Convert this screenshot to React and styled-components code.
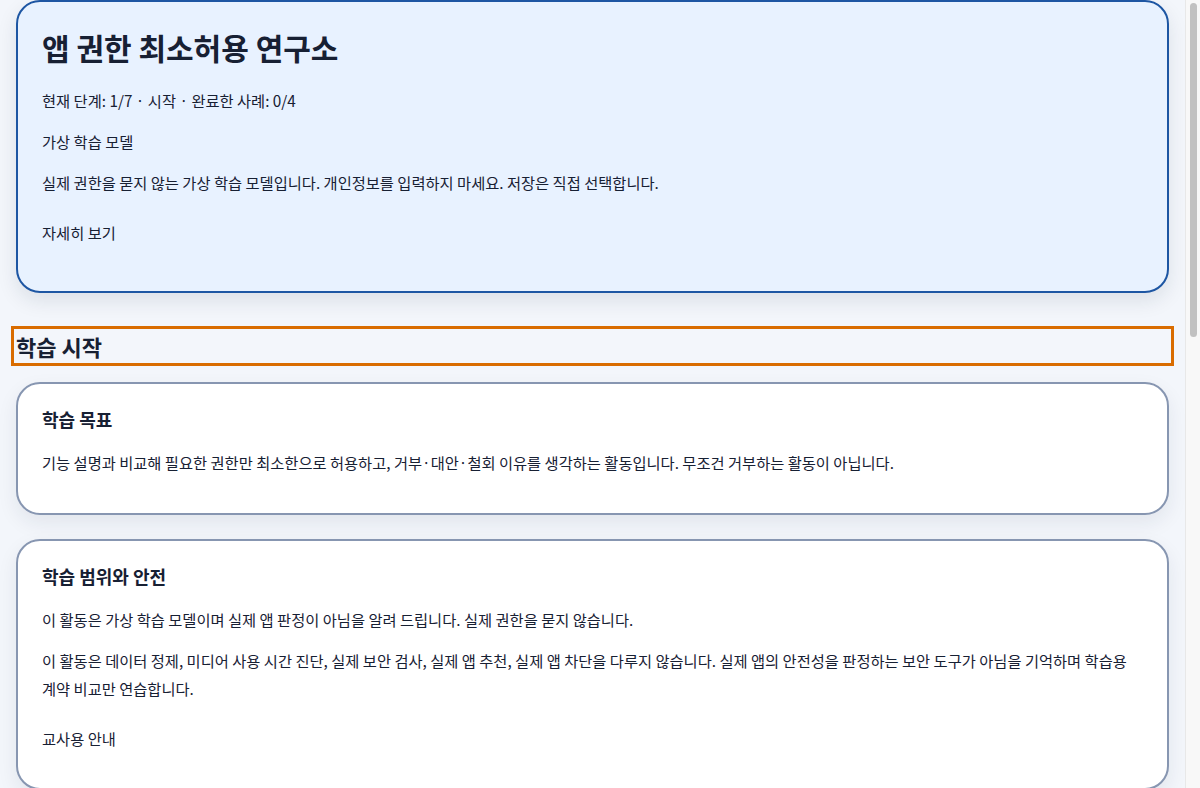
import React from 'react'
import styled, { createGlobalStyle } from 'styled-components'

const GlobalStyle = createGlobalStyle`
  html, body {
    margin: 0;
    padding: 0;
    height: 100%;
    overflow: hidden;
  }
  body {
    background: #f3f6fb;
    color: #172033;
    font-family: "Noto Sans CJK KR", "Noto Sans", sans-serif;
    word-break: keep-all;
  }
  * {
    box-sizing: border-box;
  }
`

const Shell = styled.div`
  display: flex;
  height: 100vh;
`

const Viewport = styled.div`
  flex: 1;
  min-width: 0;
  overflow-y: auto;
  scrollbar-width: none;
  &::-webkit-scrollbar {
    display: none;
  }
`

const ScrollRail = styled.div`
  flex: 0 0 15px;
  display: flex;
  flex-direction: column;
  padding: 3px 3px 0 4px;
  background: #f8f8f8;
  border-left: 1px solid #e8e8e8;
`

const ScrollThumb = styled.div`
  height: ${props => props.size}px;
  border-radius: 4px;
  background: #c1c1c1;
`

const Page = styled.main`
  display: flex;
  flex-direction: column;
  padding: 0 16px 48px;
`

const Hero = styled.header`
  background: #e8f2ff;
  border: 2px solid #1d56a3;
  border-radius: 24px;
  padding: 24px;
  box-shadow: 0 8px 20px rgba(20, 35, 60, 0.1);
`

const Title = styled.h1`
  margin: 0 0 18px;
  font-size: 30px;
  line-height: 42px;
  font-weight: 700;
`

const Text = styled.p`
  margin: 13px 0;
  font-size: 15.3px;
  line-height: 28px;
  &:first-of-type {
    margin-top: 0;
  }
`

const Details = styled.details`
  margin: 22px 0 ${props => props.after || 0}px;
`

const Summary = styled.summary`
  list-style: none;
  cursor: pointer;
  font-size: 15.3px;
  line-height: 28px;
  &::-webkit-details-marker {
    display: none;
  }
`

const SectionTitle = styled.h2`
  margin: 38px 0 21px;
  font-size: 22px;
  line-height: 30px;
  font-weight: 700;
  outline: ${props => props.focused ? '3px solid #d96c00' : 'none'};
  outline-offset: 2px;
`

const Card = styled.section`
  background: #ffffff;
  border: 2px solid #8796b1;
  border-radius: 24px;
  padding: 24px;
  margin-bottom: 24px;
  box-shadow: 0 8px 20px rgba(20, 35, 60, 0.08);
  & > p:last-child {
    margin-bottom: 13px;
  }
`

const CardTitle = styled.h3`
  margin: 0 0 18px;
  font-size: 18px;
  line-height: 22px;
  font-weight: 700;
`

const ButtonRow = styled.div`
  display: flex;
  gap: 12px;
  margin: 8px 0 12px;
`

const Button = styled.button`
  font: inherit;
  font-size: 15px;
  padding: 10px 20px;
  border-radius: 12px;
  border: 2px solid ${props => props.primary ? '#1d56a3' : '#8796b1'};
  background: ${props => props.primary ? '#1d56a3' : '#ffffff'};
  color: ${props => props.primary ? '#ffffff' : '#172033'};
`

export default function App() {
  return (
    <>
      <GlobalStyle />
      <Shell>
        <Viewport>
          <Page>
            <Hero>
              <Title>앱 권한 최소허용 연구소</Title>
              <Text>현재 단계: 1/7 · 시작 · 완료한 사례: 0/4</Text>
              <Text>가상 학습 모델</Text>
              <Text>실제 권한을 묻지 않는 가상 학습 모델입니다. 개인정보를 입력하지 마세요. 저장은 직접 선택합니다.</Text>
              <Details after={21}>
                <Summary>자세히 보기</Summary>
              </Details>
            </Hero>

            <SectionTitle tabIndex={-1} focused>학습 시작</SectionTitle>

            <Card>
              <CardTitle>학습 목표</CardTitle>
              <Text>기능 설명과 비교해 필요한 권한만 최소한으로 허용하고, 거부·대안·철회 이유를 생각하는 활동입니다. 무조건 거부하는 활동이 아닙니다.</Text>
            </Card>

            <Card>
              <CardTitle>학습 범위와 안전</CardTitle>
              <Text>이 활동은 가상 학습 모델이며 실제 앱 판정이 아님을 알려 드립니다. 실제 권한을 묻지 않습니다.</Text>
              <Text>이 활동은 데이터 정제, 미디어 사용 시간 진단, 실제 보안 검사, 실제 앱 추천, 실제 앱 차단을 다루지 않습니다. 실제 앱의 안전성을 판정하는 보안 도구가 아님을 기억하며 학습용 계약 비교만 연습합니다.</Text>
              <Details after={12}>
                <Summary>교사용 안내</Summary>
              </Details>
            </Card>

            <Card>
              <CardTitle>활동 순서</CardTitle>
              <Text>1. 가상 앱의 기능 설명을 읽습니다.</Text>
              <Text>2. 요청된 권한 목록을 기능과 비교합니다.</Text>
              <Text>3. 허용·거부·대안 중 하나를 고르고 이유를 적습니다.</Text>
              <Text>4. 필요할 때 권한을 철회하는 방법을 확인합니다.</Text>
            </Card>

            <Card>
              <CardTitle>준비되었나요?</CardTitle>
              <Text>사례는 모두 네 가지입니다. 언제든지 처음 단계로 돌아갈 수 있습니다.</Text>
              <ButtonRow>
                <Button primary>사례 시작하기</Button>
                <Button>저장된 기록 불러오기</Button>
              </ButtonRow>
            </Card>

            <Card>
              <CardTitle>저장 안내</CardTitle>
              <Text>진행 상황은 직접 저장을 눌렀을 때만 이 브라우저에 남습니다. 기록 지우기로 언제든지 삭제할 수 있습니다.</Text>
            </Card>
          </Page>
        </Viewport>
        <ScrollRail>
          <ScrollThumb size={334} />
        </ScrollRail>
      </Shell>
    </>
  )
}
